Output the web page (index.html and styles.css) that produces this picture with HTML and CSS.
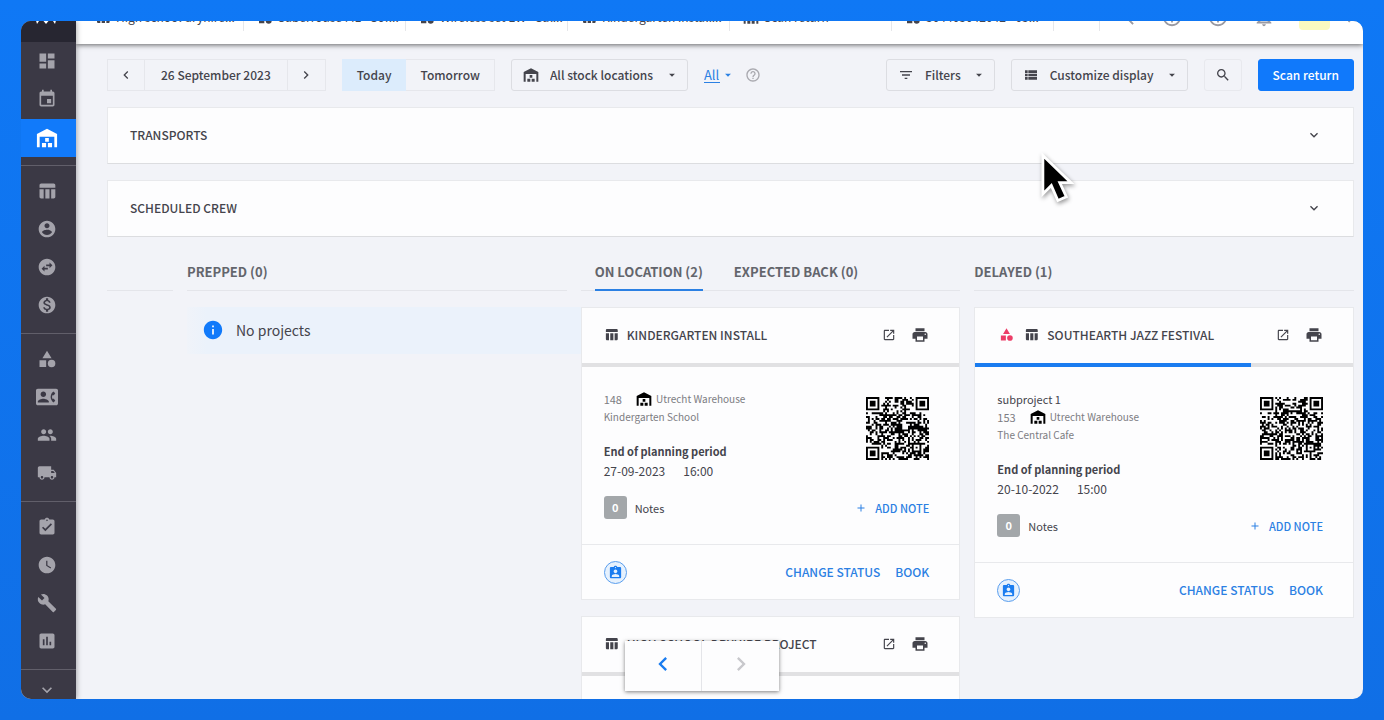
FILE: index.html
```
<!DOCTYPE html>
<html lang="en">
<head>
    <meta charset="UTF-8">
    <meta name="viewport" content="width=device-width, initial-scale=1.0">
    <title>Warehouse planning</title>
    <link rel="stylesheet" href="styles.css">
</head>
<body>
    <!-- Icon sprite -->
    <svg class="sprite" aria-hidden="true">
        <symbol id="dashboard" viewBox="0 0 24 24"><path d="M3 13h8V3H3v10zm0 8h8v-6H3v6zm10 0h8V11h-8v10zm0-18v6h8V3h-8z"/></symbol>
        <symbol id="event" viewBox="0 0 24 24"><path d="M17 12h-5v5h5v-5zM16 1v2H8V1H6v2H5c-1.11 0-1.99.9-1.99 2L3 19c0 1.1.89 2 2 2h14c1.1 0 2-.9 2-2V5c0-1.1-.9-2-2-2h-1V1h-2zm3 18H5V8h14v11z"/></symbol>
        <symbol id="warehouse" viewBox="0 0 24 24"><path d="M1 22V7.5L12 2l11 5.500V22h-3V10.500H4V22H1zM10 12h4v4h-4zM6.500 17.500h4.500V22H6.500zM13 17.500h4.500V22H13z"/></symbol>
        <symbol id="table" viewBox="0 0 24 24"><path d="M10 10h5v11h-5zM17 21h3c1.100 0 2-.9 2-2v-9h-5v11zm3-18H5c-1.100 0-2 .9-2 2v3h19V5c0-1.100-.9-2-2-2zM3 19c0 1.100.9 2 2 2h3V10H3v9z"/></symbol>
        <symbol id="account" viewBox="0 0 24 24"><path d="M12 2C6.480 2 2 6.480 2 12s4.480 10 10 10 10-4.480 10-10S17.520 2 12 2zm0 3c1.660 0 3 1.340 3 3s-1.340 3-3 3-3-1.340-3-3 1.340-3 3-3zm0 14.200c-2.500 0-4.710-1.280-6-3.220.03-1.990 4-3.080 6-3.080 1.990 0 5.970 1.090 6 3.080-1.290 1.940-3.500 3.220-6 3.220z"/></symbol>
        <symbol id="swap" viewBox="0 0 24 24"><path d="M22 12c0-5.520-4.480-10-10-10S2 6.480 2 12s4.480 10 10 10 10-4.480 10-10zm-7-5.500l3.500 3.500-3.500 3.500V11h-4V9h4V6.500zm-6 11L5.500 14 9 10.500V13h4v2H9v2.500z"/></symbol>
        <symbol id="money" viewBox="0 0 24 24"><path d="M12 2C6.480 2 2 6.480 2 12s4.480 10 10 10 10-4.480 10-10S17.520 2 12 2zm1.410 16.090V20h-2.670v-1.930c-1.710-.36-3.160-1.460-3.270-3.400h1.960c.1 1.050.82 1.870 2.650 1.870 1.960 0 2.400-.98 2.400-1.590 0-.83-.44-1.610-2.670-2.140-2.480-.6-4.180-1.620-4.180-3.670 0-1.720 1.390-2.840 3.110-3.210V4h2.670v1.950c1.860.45 2.790 1.860 2.850 3.390H14.300c-.05-1.110-.64-1.870-2.220-1.870-1.500 0-2.400.68-2.400 1.640 0 .84.65 1.390 2.670 1.910s4.180 1.390 4.180 3.910c-.01 1.830-1.380 2.830-3.120 3.160z"/></symbol>
        <symbol id="category" viewBox="0 0 24 24"><path d="M12 2l-5.500 9h11zM3 13.500h8v8H3z"/><circle cx="17.500" cy="17.500" r="4.500"/></symbol>
        <symbol id="contact" viewBox="0 0 24 24"><path d="M22 3H2C.9 3 0 3.900 0 5v14c0 1.100.9 2 2 2h20c1.100 0 1.990-.9 1.990-2L24 5c0-1.100-.9-2-2-2zM8 6c1.660 0 3 1.340 3 3s-1.340 3-3 3-3-1.340-3-3 1.340-3 3-3zm6 12H2v-1c0-2 4-3.100 6-3.100s6 1.100 6 3.100v1zm3.850-4h1.640L21 16l-1.990 1.990c-1.310-.98-2.280-2.380-2.730-3.990-.18-.64-.28-1.310-.28-2s.1-1.360.28-2c.45-1.620 1.420-3.010 2.730-3.990L21 8l-1.510 2h-1.640c-.22.63-.35 1.300-.35 2s.13 1.370.35 2z"/></symbol>
        <symbol id="people" viewBox="0 0 24 24"><path d="M16 11c1.660 0 2.990-1.340 2.990-3S17.660 5 16 5c-1.660 0-3 1.340-3 3s1.340 3 3 3zm-8 0c1.660 0 2.990-1.340 2.990-3S9.660 5 8 5C6.340 5 5 6.340 5 8s1.340 3 3 3zm0 2c-2.330 0-7 1.170-7 3.500V19h14v-2.500c0-2.330-4.670-3.500-7-3.500zm8 0c-.29 0-.62.02-.97.05 1.160.84 1.970 1.970 1.970 3.450V19h6v-2.500c0-2.330-4.670-3.500-7-3.500z"/></symbol>
        <symbol id="truck" viewBox="0 0 24 24"><path d="M20 8h-3V4H3c-1.100 0-2 .9-2 2v11h2c0 1.660 1.340 3 3 3s3-1.340 3-3h6c0 1.660 1.340 3 3 3s3-1.340 3-3h2v-5l-3-4zM6 18.500c-.83 0-1.500-.67-1.500-1.500s.67-1.500 1.500-1.500 1.500.67 1.500 1.500-.67 1.500-1.500 1.500zm13.500-9l1.960 2.500H17V9.500h2.500zm-1.500 9c-.83 0-1.500-.67-1.500-1.500s.67-1.500 1.500-1.500 1.500.67 1.500 1.500-.67 1.500-1.500 1.500z"/></symbol>
        <symbol id="task" viewBox="0 0 24 24"><path d="M19 3h-4.180C14.400 1.840 13.300 1 12 1c-1.300 0-2.400.84-2.820 2H5c-1.100 0-2 .9-2 2v14c0 1.100.9 2 2 2h14c1.100 0 2-.9 2-2V5c0-1.100-.9-2-2-2zm-7 0c.55 0 1 .45 1 1s-.45 1-1 1-1-.45-1-1 .45-1 1-1zm-2 14l-4-4 1.410-1.410L10 14.170l6.590-6.590L18 9l-8 8z"/></symbol>
        <symbol id="clock" viewBox="0 0 24 24"><path d="M12 2C6.500 2 2 6.500 2 12s4.500 10 10 10 10-4.500 10-10S17.500 2 12 2zm4.200 14.200L11 13V7h1.500v5.200l4.500 2.700-.8 1.300z"/></symbol>
        <symbol id="wrench" viewBox="0 0 24 24"><path d="M22.700 19l-9.100-9.100c.9-2.300.4-5-1.500-6.900-2-2-5-2.400-7.400-1.300L9 6 6 9 1.600 4.700C.4 7.100.9 10.100 2.900 12.100c1.900 1.900 4.600 2.400 6.900 1.500l9.100 9.100c.4.4 1 .4 1.400 0l2.300-2.300c.5-.4.5-1.100.1-1.400z"/></symbol>
        <symbol id="chart" viewBox="0 0 24 24"><path d="M19 3H5c-1.100 0-2 .9-2 2v14c0 1.100.9 2 2 2h14c1.100 0 2-.9 2-2V5c0-1.100-.9-2-2-2zM9 17H7v-7h2v7zm4 0h-2V7h2v10zm4 0h-2v-4h2v4z"/></symbol>
        <symbol id="down" viewBox="0 0 24 24"><path d="M16.590 8.590L12 13.170 7.410 8.590 6 10l6 6 6-6z"/></symbol>
        <symbol id="left" viewBox="0 0 24 24"><path d="M15.410 7.410L14 6l-6 6 6 6 1.410-1.410L10.830 12z"/></symbol>
        <symbol id="right" viewBox="0 0 24 24"><path d="M10 6L8.590 7.410 13.170 12l-4.580 4.590L10 18l6-6z"/></symbol>
        <symbol id="caret" viewBox="0 0 24 24"><path d="M7 10l5 5 5-5z"/></symbol>
        <symbol id="search" viewBox="0 0 24 24"><path d="M15.500 14h-.79l-.28-.27C15.410 12.590 16 11.110 16 9.500 16 5.910 13.090 3 9.500 3S3 5.910 3 9.500 5.910 16 9.500 16c1.610 0 3.090-.59 4.230-1.570l.27.28v.79l5 4.990L20.490 19l-4.990-5zm-6 0C7.010 14 5 11.990 5 9.500S7.010 5 9.500 5 14 7.010 14 9.500 11.990 14 9.500 14z"/></symbol>
        <symbol id="print" viewBox="0 0 24 24"><path d="M19 8H5c-1.660 0-3 1.340-3 3v6h4v4h12v-4h4v-6c0-1.660-1.340-3-3-3zm-3 11H8v-5h8v5zm3-7c-.55 0-1-.45-1-1s.45-1 1-1 1 .45 1 1-.45 1-1 1zm-1-9H6v4h12V3z"/></symbol>
        <symbol id="open" viewBox="0 0 24 24"><path d="M19 19H5V5h7V3H5c-1.110 0-2 .9-2 2v14c0 1.100.89 2 2 2h14c1.100 0 2-.9 2-2v-7h-2v7zM14 3v2h3.590l-9.830 9.830 1.410 1.410L19 6.410V10h2V3h-7z"/></symbol>
        <symbol id="filter" viewBox="0 0 24 24"><path d="M10 18h4v-2h-4v2zM3 6v2h18V6H3zm3 7h12v-2H6v2z"/></symbol>
        <symbol id="list" viewBox="0 0 24 24"><path d="M3 14h4v-4H3v4zm0 5h4v-4H3v4zM3 9h4V5H3v4zm5 5h13v-4H8v4zm0 5h13v-4H8v4zM8 5v4h13V5H8z"/></symbol>
        <symbol id="help" viewBox="0 0 24 24"><path d="M11 18h2v-2h-2v2zm1-16C6.480 2 2 6.480 2 12s4.480 10 10 10 10-4.480 10-10S17.520 2 12 2zm0 18c-4.410 0-8-3.590-8-8s3.590-8 8-8 8 3.590 8 8-3.590 8-8 8zm0-14c-2.210 0-4 1.790-4 4h2c0-1.100.9-2 2-2s2 .9 2 2c0 2-3 1.750-3 5h2c0-2.250 3-2.500 3-5 0-2.210-1.790-4-4-4z"/></symbol>
        <symbol id="info" viewBox="0 0 24 24"><path d="M12 2C6.480 2 2 6.480 2 12s4.480 10 10 10 10-4.480 10-10S17.520 2 12 2zm1 15h-2v-6h2v6zm0-8h-2V7h2v2z"/></symbol>
        <symbol id="badge" viewBox="0 0 24 24"><path d="M19 3h-4.180C14.400 1.840 13.300 1 12 1c-1.300 0-2.400.84-2.820 2H5c-1.100 0-2 .9-2 2v14c0 1.100.9 2 2 2h14c1.100 0 2-.9 2-2V5c0-1.100-.9-2-2-2zm-7 0c.55 0 1 .45 1 1s-.45 1-1 1-1-.45-1-1 .45-1 1-1zm0 4c1.660 0 3 1.340 3 3s-1.340 3-3 3-3-1.340-3-3 1.340-3 3-3zm6 12H6v-1.400c0-2 4-3.100 6-3.100s6 1.100 6 3.100V19z"/></symbol>
        <symbol id="plus" viewBox="0 0 24 24"><path d="M19 13h-6v6h-2v-6H5v-2h6V5h2v6h6v2z"/></symbol>
        <symbol id="bell" viewBox="0 0 24 24"><path d="M12 22c1.100 0 2-.9 2-2h-4c0 1.100.9 2 2 2zm6-6v-5c0-3.070-1.640-5.640-4.500-6.320V4c0-.83-.67-1.500-1.500-1.500s-1.500.67-1.500 1.500v.68C7.630 5.360 6 7.920 6 11v5l-2 2v1h16v-1l-2-2zm-2 1H8v-6c0-2.480 1.510-4.500 4-4.500s4 2.020 4 4.500v6z"/></symbol>
    </svg>

    <div class="frame">
        <aside class="sidebar">
            <div class="logo">
                <svg viewBox="0 0 28 16"><path d="M1 2h26L23 16l-4-6-5 6-5-6-4 6z"/></svg>
            </div>
            <nav>
                <div class="nav-group nav-group-first">
                    <a href="#" aria-label="Dashboard"><svg><use href="#dashboard"/></svg></a>
                    <a href="#" aria-label="Calendar"><svg><use href="#event"/></svg></a>
                    <a href="#" class="active" aria-label="Warehouse"><svg><use href="#warehouse"/></svg></a>
                </div>
                <div class="nav-group">
                    <a href="#" aria-label="Projects"><svg><use href="#table"/></svg></a>
                    <a href="#" aria-label="Account"><svg><use href="#account"/></svg></a>
                    <a href="#" aria-label="Subrent"><svg><use href="#swap"/></svg></a>
                    <a href="#" aria-label="Finance"><svg><use href="#money"/></svg></a>
                </div>
                <div class="nav-group">
                    <a href="#" aria-label="Equipment"><svg><use href="#category"/></svg></a>
                    <a href="#" aria-label="Contacts"><svg class="wide"><use href="#contact"/></svg></a>
                    <a href="#" aria-label="Crew"><svg><use href="#people"/></svg></a>
                    <a href="#" aria-label="Vehicles"><svg><use href="#truck"/></svg></a>
                </div>
                <div class="nav-group">
                    <a href="#" aria-label="Tasks"><svg><use href="#task"/></svg></a>
                    <a href="#" aria-label="Time"><svg><use href="#clock"/></svg></a>
                    <a href="#" aria-label="Maintenance"><svg><use href="#wrench"/></svg></a>
                    <a href="#" aria-label="Statistics"><svg><use href="#chart"/></svg></a>
                </div>
                <button class="nav-more" aria-label="More"><svg><use href="#down"/></svg></button>
            </nav>
        </aside>

        <main class="main">
            <header class="topbar">
                <div class="tabs">
                    <a href="#" class="tab"><svg><use href="#table"/></svg>High school dryhire...</a>
                    <a href="#" class="tab"><svg><use href="#category"/></svg>Saberrouse ML - Sor...</a>
                    <a href="#" class="tab"><svg><use href="#category"/></svg>Wireless set EW - Sal...</a>
                    <a href="#" class="tab"><svg><use href="#table"/></svg>Kindergarten install...</a>
                    <a href="#" class="tab"><svg><use href="#warehouse"/></svg>Scan return</a>
                    <a href="#" class="tab"><svg><use href="#category"/></svg>304403042042 - 03...</a>
                    <button class="tab tab-more" aria-label="More tabs"><svg><use href="#left"/></svg></button>
                </div>
                <div class="top-actions">
                    <button aria-label="Search"><svg><use href="#search"/></svg></button>
                    <button aria-label="Time"><svg><use href="#help"/></svg></button>
                    <button aria-label="Help"><svg><use href="#help"/></svg></button>
                    <button aria-label="Notifications"><svg><use href="#bell"/></svg></button>
                    <span class="avatar"></span>
                    <button class="profile" aria-label="Profile menu"><svg><use href="#right"/></svg></button>
                </div>
            </header>

            <div class="content">
                <div class="toolbar">
                    <div class="btn-group">
                        <button class="btn icon-btn" aria-label="Previous day"><svg><use href="#left"/></svg></button>
                        <button class="btn date">26 September 2023</button>
                        <button class="btn icon-btn" aria-label="Next day"><svg><use href="#right"/></svg></button>
                    </div>
                    <div class="btn-group">
                        <button class="btn today">Today</button>
                        <button class="btn">Tomorrow</button>
                    </div>
                    <label class="btn dropdown">
                        <svg><use href="#warehouse"/></svg>
                        <select aria-label="Stock location"><option>All stock locations</option></select>
                        <svg class="caret"><use href="#caret"/></svg>
                    </label>
                    <label class="all">
                        <select aria-label="Filter"><option>All</option></select>
                        <svg class="caret"><use href="#caret"/></svg>
                    </label>
                    <button class="help" aria-label="Help"><svg><use href="#help"/></svg></button>
                    <div class="toolbar-right">
                        <button class="btn dropdown"><svg><use href="#filter"/></svg>Filters<svg class="caret"><use href="#caret"/></svg></button>
                        <button class="btn dropdown"><svg><use href="#list"/></svg>Customize display<svg class="caret"><use href="#caret"/></svg></button>
                        <button class="btn icon-btn search" aria-label="Search"><svg><use href="#search"/></svg></button>
                        <button class="btn primary">Scan return</button>
                    </div>
                </div>

                <button class="panel">Transports<svg><use href="#down"/></svg></button>
                <button class="panel">Scheduled crew<svg><use href="#down"/></svg></button>

                <div class="board">
                    <section class="column">
                        <div class="column-head"></div>
                    </section>

                    <section class="column">
                        <div class="column-head"><h2>Prepped (0)</h2></div>
                        <div class="empty"><svg><use href="#info"/></svg>No projects</div>
                    </section>

                    <section class="column">
                        <div class="column-head column-tabs">
                            <button class="selected">On location (2)</button>
                            <button>Expected back (0)</button>
                        </div>
                        <article class="card">
                            <div class="card-head">
                                <svg><use href="#table"/></svg>
                                <h3>Kindergarten install</h3>
                                <button aria-label="Open"><svg class="open"><use href="#open"/></svg></button>
                                <button aria-label="Print"><svg class="print"><use href="#print"/></svg></button>
                            </div>
                            <div class="progress"></div>
                            <div class="card-body">
                                <div class="info">
                                    <div class="meta"><span class="number">148</span><svg><use href="#warehouse"/></svg>Utrecht Warehouse</div>
                                    <div class="meta">Kindergarten School</div>
                                    <div class="period">
                                        <strong>End of planning period</strong>
                                        <div class="when"><span>27-09-2023</span><span>16:00</span></div>
                                    </div>
                                </div>
                                <svg class="qr" viewBox="0 0 33 33" data-seed="148"></svg>
                            </div>
                            <div class="notes">
                                <span class="count">0</span>Notes
                                <button class="link"><svg><use href="#plus"/></svg>Add note</button>
                            </div>
                            <div class="card-foot">
                                <span class="person"><svg><use href="#badge"/></svg></span>
                                <button class="link">Change status</button>
                                <button class="link">Book</button>
                            </div>
                        </article>
                        <article class="card">
                            <div class="card-head">
                                <svg><use href="#table"/></svg>
                                <h3>High school dryhire project</h3>
                                <button aria-label="Open"><svg class="open"><use href="#open"/></svg></button>
                                <button aria-label="Print"><svg class="print"><use href="#print"/></svg></button>
                            </div>
                            <div class="progress"></div>
                            <div class="card-body">
                                <div class="info">
                                    <div class="meta"><span class="number">149</span><svg><use href="#warehouse"/></svg>Utrecht Warehouse</div>
                                </div>
                            </div>
                        </article>
                    </section>

                    <section class="column">
                        <div class="column-head"><h2>Delayed (1)</h2></div>
                        <article class="card">
                            <div class="card-head">
                                <svg class="alert"><use href="#category"/></svg>
                                <svg><use href="#table"/></svg>
                                <h3>Southearth Jazz Festival</h3>
                                <button aria-label="Open"><svg class="open"><use href="#open"/></svg></button>
                                <button aria-label="Print"><svg class="print"><use href="#print"/></svg></button>
                            </div>
                            <div class="progress"><div class="bar" style="width: 73%"></div></div>
                            <div class="card-body">
                                <div class="info">
                                    <div class="subproject">subproject 1</div>
                                    <div class="meta"><span class="number">153</span><svg><use href="#warehouse"/></svg>Utrecht Warehouse</div>
                                    <div class="meta">The Central Cafe</div>
                                    <div class="period">
                                        <strong>End of planning period</strong>
                                        <div class="when"><span>20-10-2022</span><span>15:00</span></div>
                                    </div>
                                </div>
                                <svg class="qr" viewBox="0 0 33 33" data-seed="153"></svg>
                            </div>
                            <div class="notes">
                                <span class="count">0</span>Notes
                                <button class="link"><svg><use href="#plus"/></svg>Add note</button>
                            </div>
                            <div class="card-foot">
                                <span class="person"><svg><use href="#badge"/></svg></span>
                                <button class="link">Change status</button>
                                <button class="link">Book</button>
                            </div>
                        </article>
                    </section>
                </div>
            </div>
        </main>

        <div class="pager">
            <button aria-label="Previous"><svg><use href="#left"/></svg></button>
            <button aria-label="Next" disabled><svg><use href="#right"/></svg></button>
        </div>
    </div>

    <svg class="cursor" viewBox="0 0 32 52"><path d="M2 2v41l9-9 7 16 9-4-7-15h12z"/></svg>

    <script src="qr.js"></script>
</body>
</html>
```
FILE: styles.css
```
* {
    box-sizing: border-box;
}
body {
    margin: 0;
    height: 100vh;
    padding: 21px;
    background: linear-gradient(#0f78f5, #106fe6);
    font-family: "Noto Sans CJK SC", "Noto Sans", sans-serif;
    font-size: 12px;
    line-height: 18px;
    color: #44444c;
    overflow: hidden;
}
svg {
    width: 16px;
    height: 16px;
    fill: currentColor;
    flex: none;
}
button, select {
    font: inherit;
    color: inherit;
    background: none;
    border: 0;
    padding: 0;
    cursor: pointer;
}
button {
    display: inline-flex;
    align-items: center;
    justify-content: center;
}
select {
    appearance: none;
}
a {
    color: inherit;
    text-decoration: none;
}
h2, h3 {
    margin: 0;
    font-weight: 500;
    text-transform: uppercase;
}
.sprite {
    display: none;
}
.frame {
    position: relative;
    display: flex;
    height: 100%;
    border-radius: 10px;
    overflow: hidden;
    background: #f2f3f8;
}

/* Sidebar */
.sidebar {
    width: 55px;
    flex: none;
    background: #3b3945;
    color: #a4a3ab;
    box-shadow: 1px 0 5px rgba(0,0,0,0.3);
    z-index: 2;
}
.logo {
    display: flex;
    justify-content: center;
    align-items: flex-end;
    height: 21px;
    padding: 0 6px 18px 0;
    background: #272631;
    color: white;
}
.logo svg {
    width: 28px;
}
.nav-group {
    padding: 6px 0 9px;
    border-bottom: 1px solid #615f6a;
}
.nav-group-first {
    padding: 0 0 8px;
}
.nav-group a {
    display: flex;
    align-items: center;
    justify-content: center;
    height: 38px;
    padding-right: 3px;
}
.nav-group svg {
    width: 20px;
    height: 20px;
}
.nav-group svg.wide {
    width: 22px;
    height: 22px;
}
.nav-group a.active {
    margin-top: 1px;
    background: #117afa;
    color: white;
}
.active svg {
    width: 22px;
    height: 22px;
}
.nav-more {
    width: 100%;
    height: 40px;
    padding-right: 3px;
}
.nav-more svg {
    width: 20px;
    height: 20px;
}

/* Top bar */
.main {
    flex: 1;
    min-width: 0;
}
.topbar {
    position: relative;
    display: flex;
    align-items: flex-end;
    justify-content: space-between;
    height: 23px;
    padding: 0 1px 13px 6px;
    background: white;
    box-shadow: 0 1px 5px rgba(0,0,0,0.6);
}
.tabs {
    display: flex;
}
.tab {
    display: flex;
    align-items: center;
    gap: 5px;
    width: 162px;
    height: 26px;
    padding: 0 0 2px 13px;
    border-right: 1px solid #e6e7ea;
    white-space: nowrap;
    overflow: hidden;
}
.tab-more {
    width: 46px;
    color: #8c8c94;
}
.top-actions {
    display: flex;
    align-items: center;
    gap: 24px;
    height: 26px;
    padding-bottom: 2px;
    color: #9a9aa2;
}
.top-actions svg {
    width: 22px;
    height: 22px;
}
.avatar {
    width: 31px;
    height: 26px;
    border-radius: 4px;
    background: #fafac0;
}
.profile {
    margin-left: -14px;
}

/* Toolbar */
.content {
    padding: 15px 9px 0 31px;
}
.toolbar {
    display: flex;
    align-items: center;
    gap: 16px;
    margin-bottom: 16px;
}
.toolbar-right {
    display: flex;
    gap: 16px;
    margin-left: auto;
}
.btn {
    display: inline-flex;
    align-items: center;
    height: 32px;
    padding: 0 14px;
    border: 1px solid #dcdde2;
    border-radius: 3px;
    font-weight: 500;
}
.btn-group {
    display: flex;
}
.btn-group .btn {
    border-color: #e6e7ec;
    border-radius: 0;
}
.btn-group .btn + .btn {
    border-left-width: 0;
}
.btn-group .date {
    padding: 0 16px;
}
.icon-btn {
    width: 38px;
    padding: 0;
}
.search {
    border-color: #e8e9ee;
}
.btn-group .today {
    border-color: #dcecfc;
    background: #dcecfc;
}
.dropdown {
    gap: 11px;
    padding: 0 8px 0 11px;
}
.caret {
    width: 14px;
    height: 14px;
}
.all {
    display: flex;
    align-items: center;
    gap: 1px;
    color: #2b80e3;
    font-size: 13px;
}
.all select {
    border-bottom: 1px solid #2b80e3;
    line-height: 15px;
}
.help {
    margin-left: -6px;
    color: #a9a9af;
}
.primary {
    background: #1079fb;
    border-color: #1079fb;
    color: white;
}

/* Panels */
.panel {
    display: flex;
    justify-content: space-between;
    width: 100%;
    height: 57px;
    margin-bottom: 16px;
    padding: 0 31px 2px 22px;
    background: #fdfdfe;
    border: 1px solid #e8e9ec;
    border-bottom-color: #dcdde0;
    font-weight: 500;
    text-transform: uppercase;
}

/* Board */
.board {
    display: grid;
    grid-template-columns: 66px repeat(3, minmax(0, 1fr));
    gap: 14px;
}
.column-head {
    display: flex;
    align-items: center;
    height: 38px;
    margin-bottom: 16px;
    border-bottom: 1px solid #e4e5ea;
    font-size: 13px;
    color: #63656c;
}
.column-head h2 {
    font-size: 13px;
    font-weight: 700;
}
.column-tabs {
    gap: 31px;
    padding-left: 14px;
}
.column-tabs button {
    height: 38px;
    padding-top: 2px;
    border-bottom: 2px solid transparent;
    font-weight: 700;
    text-transform: uppercase;
}
.column-tabs .selected {
    border-color: #2b80e3;
}
.empty {
    display: flex;
    align-items: center;
    gap: 12px;
    height: 47px;
    margin-right: -14px;
    padding: 0 0 2px 15px;
    background: linear-gradient(90deg, #f0f3f9, #ebf2fb 20px);
    font-size: 14px;
}
.empty svg {
    width: 22px;
    height: 22px;
    color: #117afa;
}

/* Cards */
.card {
    margin-bottom: 16px;
    background: #fdfdfe;
    border: 1px solid #e8e9ec;
}
.card-head {
    display: flex;
    align-items: center;
    gap: 8px;
    height: 55px;
    padding: 0 30px 2px 22px;
}
.card-head h3 {
    flex: 1;
    font-size: 12px;
}
.card-head button {
    margin-left: 7px;
}
.card-head .alert {
    margin: 0 2px;
    color: #ec3e68;
}
.card-head svg {
    width: 15px;
    height: 15px;
}
.card-head svg.open {
    width: 14px;
    height: 14px;
}
.card-head svg.print {
    width: 18px;
    height: 18px;
}
.progress {
    height: 4px;
    background: #e1e1e3;
}
.bar {
    height: 100%;
    background: #1a7cf0;
}
.card-body {
    display: flex;
    justify-content: space-between;
    padding: 23px 30px 0 22px;
}
.subproject {
    font-size: 11px;
}
.meta {
    display: flex;
    align-items: center;
    height: 18px;
    font-size: 10px;
    color: #7c7c82;
}
.number {
    font-size: 11px;
}
.meta svg {
    margin: 0 4px 0 14px;
    color: black;
}
.period {
    margin-top: 15px;
    line-height: 19px;
}
.period strong {
    font-size: 11px;
    font-weight: 700;
}
.when {
    display: flex;
    gap: 18px;
}
.qr {
    width: 63px;
    height: 63px;
    margin-top: 7px;
    color: black;
}
.notes {
    display: flex;
    align-items: center;
    gap: 8px;
    padding: 16px 30px 25px 22px;
    font-size: 11px;
}
.count {
    width: 23px;
    height: 23px;
    border-radius: 3px;
    background: #a3a7aa;
    color: white;
    font-weight: 700;
    line-height: 23px;
    text-align: center;
}
.link {
    color: #2b80e3;
    font-weight: 500;
    text-transform: uppercase;
}
.notes .link {
    gap: 8px;
    margin-left: auto;
}
.notes .link svg {
    width: 12px;
    height: 12px;
}
.card-foot {
    display: flex;
    align-items: center;
    gap: 15px;
    height: 55px;
    padding: 0 30px 0 22px;
    border-top: 1px solid #e8e9ec;
}
.person {
    display: flex;
    align-items: center;
    justify-content: center;
    width: 23px;
    height: 23px;
    margin-right: auto;
    border: 1px solid #5a9eee;
    border-radius: 50%;
    background: #e6f1fd;
    color: #1a7cf0;
}
.person svg {
    width: 15px;
    height: 15px;
}

/* Overlays */
.pager {
    position: absolute;
    left: 45%;
    bottom: 8px;
    display: flex;
    width: 154px;
    height: 50px;
    background: #fdfdfe;
    box-shadow: 0 1px 4px rgba(0,0,0,0.5);
}
.pager button {
    flex: 1;
    padding-bottom: 4px;
    color: #1a7cf0;
}
.pager button + button {
    border-left: 1px solid #e4e5e9;
    color: #c8c8cc;
}
.pager svg {
    width: 28px;
    height: 28px;
}
.cursor {
    position: absolute;
    left: 1041px;
    top: 153px;
    width: 30px;
    height: 50px;
    overflow: visible;
    fill: black;
    stroke: white;
    stroke-width: 3px;
    filter: drop-shadow(1px 2px 2px rgba(0,0,0,0.4));
}
```
FILE: qr.js
```
// Draws a 33x33 code into every .qr element
const SIZE = 33;

// Value of a finder ring at an offset from its corner, or null outside it
function finder(x, y) {
    if (x < 0 || y < 0 || x > 7 || y > 7) return null;
    if (x === 7 || y === 7) return false;
    const d = Math.max(Math.abs(x - 3), Math.abs(y - 3));
    return d !== 2;
}

function alignment(x, y) {
    const d = Math.max(Math.abs(x - 26), Math.abs(y - 26));
    return d > 2 ? null : d !== 1;
}

document.querySelectorAll('.qr').forEach(svg => {
    let seed = Number(svg.dataset.seed);
    let d = '';
    for (let y = 0; y < SIZE; y++) {
        for (let x = 0; x < SIZE; x++) {
            seed = (seed * 1103515245 + 12345) % 2147483648;
            const on = finder(x, y) ?? finder(SIZE - 1 - x, y) ?? finder(x, SIZE - 1 - y)
                ?? alignment(x, y) ?? seed / 2147483648 < 0.52;
            if (on) d += `M${x} ${y}h1v1h-1z`;
        }
    }
    svg.innerHTML = `<path d="${d}"/>`;
});
```
